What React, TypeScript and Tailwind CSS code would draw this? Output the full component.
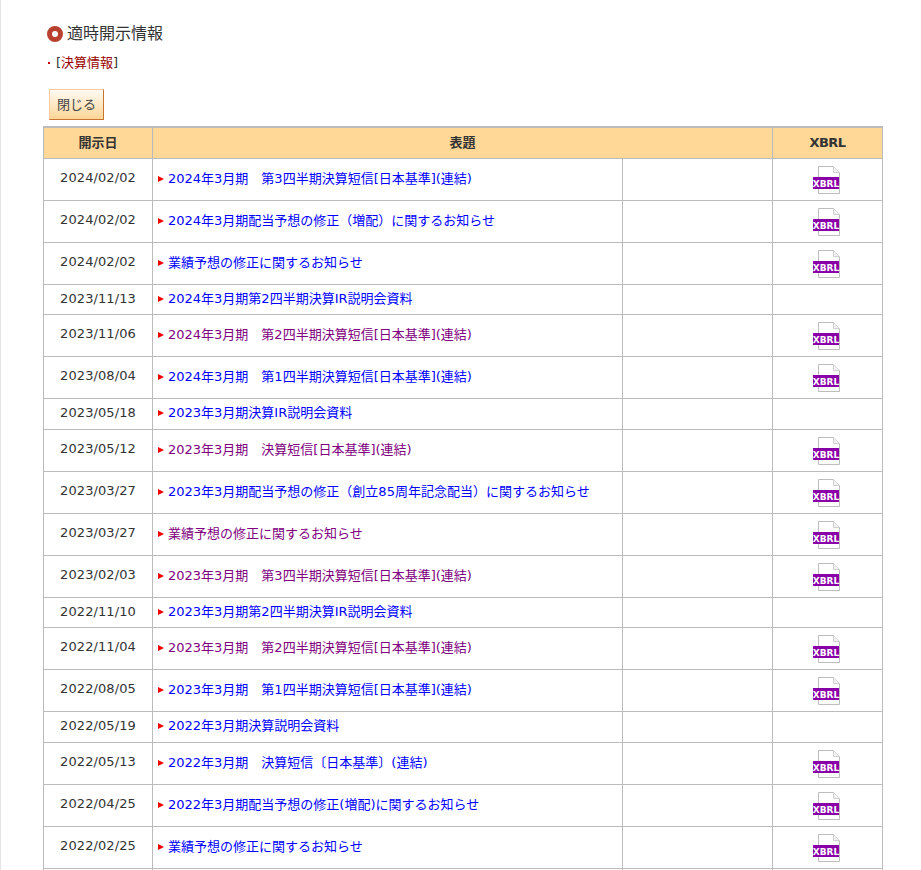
const rows = [
  { date: "2024/02/02", title: "2024年3月期　第3四半期決算短信[日本基準](連結)", xbrl: true },
  { date: "2024/02/02", title: "2024年3月期配当予想の修正（増配）に関するお知らせ", xbrl: true },
  { date: "2024/02/02", title: "業績予想の修正に関するお知らせ", xbrl: true },
  { date: "2023/11/13", title: "2024年3月期第2四半期決算IR説明会資料", h: "h-[30px]" },
  { date: "2023/11/06", title: "2024年3月期　第2四半期決算短信[日本基準](連結)", xbrl: true, visited: true },
  { date: "2023/08/04", title: "2024年3月期　第1四半期決算短信[日本基準](連結)", xbrl: true },
  { date: "2023/05/18", title: "2023年3月期決算IR説明会資料", h: "h-[31px]" },
  { date: "2023/05/12", title: "2023年3月期　決算短信[日本基準](連結)", xbrl: true, visited: true },
  { date: "2023/03/27", title: "2023年3月期配当予想の修正（創立85周年記念配当）に関するお知らせ", xbrl: true },
  { date: "2023/03/27", title: "業績予想の修正に関するお知らせ", xbrl: true, visited: true },
  { date: "2023/02/03", title: "2023年3月期　第3四半期決算短信[日本基準](連結)", xbrl: true, visited: true },
  { date: "2022/11/10", title: "2023年3月期第2四半期決算IR説明会資料", h: "h-[30px]" },
  { date: "2022/11/04", title: "2023年3月期　第2四半期決算短信[日本基準](連結)", xbrl: true, visited: true },
  { date: "2022/08/05", title: "2023年3月期　第1四半期決算短信[日本基準](連結)", xbrl: true },
  { date: "2022/05/19", title: "2022年3月期決算説明会資料", h: "h-[31px]" },
  { date: "2022/05/13", title: "2022年3月期　決算短信〔日本基準〕(連結)", xbrl: true },
  { date: "2022/04/25", title: "2022年3月期配当予想の修正(増配)に関するお知らせ", xbrl: true },
  { date: "2022/02/25", title: "業績予想の修正に関するお知らせ", xbrl: true },
];

const XbrlIcon = () => (
  <svg width="28" height="29" viewBox="0 0 28 29" className="mx-auto block">
    <path d="M5.5 .5H20.5L26.5 6.5V27.5H5.5Z" fill="#fff" stroke="#bdbdbd" />
    <path d="M20.5 .5V6.5H26.5" fill="#f2f2f2" stroke="#d0d0d0" />
    <rect x="0" y="11" width="26" height="12" fill="#8a00a8" />
    <text x="13" y="20.5" textAnchor="middle" fontFamily="DejaVu Sans" fontSize="9" fontWeight="700" fill="#fff">
      XBRL
    </text>
  </svg>
);

const Arrow = () => (
  <svg width="6" height="6" viewBox="0 0 6 6" className="mr-[4px] inline-block shrink-0">
    <polygon points="0,0 6,3 0,6" fill="#f00000" />
  </svg>
);

export default function App() {
  return (
    <div className="h-[870px] overflow-hidden border-l border-[#e4e4e4] bg-white pl-[42px] text-[13px] leading-5 text-[#333] [font-family:'DejaVu_Sans','Noto_Sans_CJK_JP',sans-serif]">
      <h2 className="flex items-center pt-[24px] pl-1 text-base leading-5 font-normal">
        <span className="mr-1 h-4 w-4 rounded-full border-[5px] border-[#b8402e]" />
        適時開示情報
      </h2>
      <p className="mt-[9px] flex items-center pl-[5px]">
        <span className="mr-[6px] h-[2px] w-[2px] bg-[#c00000]" />
        <span>
          [<span className="text-[#990000]">決算情報</span>]
        </span>
      </p>
      <button className="mt-[16px] ml-[6px] block h-[31px] w-[55px] border border-t-[#fcc9a0] border-r-[#c9742c] border-b-[#c9742c] border-l-[#fcc9a0] bg-gradient-to-b from-[#fffaf3] to-[#ffd596] text-[13px] text-[#444]">
        閉じる
      </button>
      <table className="mt-[6px] w-[840px] table-fixed border-collapse">
        <colgroup>
          <col className="w-[109px]" />
          <col className="w-[470px]" />
          <col className="w-[150px]" />
          <col className="w-[110px]" />
        </colgroup>
        <thead>
          <tr className="h-[31px] bg-[#ffd797]">
            <th className="border border-t-2 border-[#bbb] font-bold">開示日</th>
            <th colSpan={2} className="border border-t-2 border-[#bbb] font-bold">
              表題
            </th>
            <th className="border border-t-2 border-[#bbb] font-bold tracking-[-0.5px]">XBRL</th>
          </tr>
        </thead>
        <tbody>
          {rows.map((r, i) => {
            const pad = r.xbrl ? "pb-[2px]" : r.h === "h-[31px]" ? "pb-[2px]" : "";
            return (
              <tr key={i} className={r.h ?? "h-[42px]"}>
                <td className={`border border-[#bbb] text-center tracking-[0.1px] ${pad}`}>{r.date}</td>
                <td className={`border border-[#bbb] pl-[5px] whitespace-nowrap ${r.h === "h-[31px]" ? "pb-[2px]" : ""}`}>
                  <a href="#" className={`flex items-center ${r.visited ? "text-[#800080]" : "text-[#0000ff]"}`}>
                    <Arrow />
                    {r.title}
                  </a>
                </td>
                <td className="border border-[#bbb]" />
                <td className="border border-[#bbb] p-0 pt-[2px] pr-[2px] text-center">{r.xbrl && <XbrlIcon />}</td>
              </tr>
            );
          })}
          <tr className="h-[42px]">
            <td className="border border-[#bbb]" />
            <td className="border border-[#bbb]" />
            <td className="border border-[#bbb]" />
            <td className="border border-[#bbb]" />
          </tr>
        </tbody>
      </table>
    </div>
  );
}
